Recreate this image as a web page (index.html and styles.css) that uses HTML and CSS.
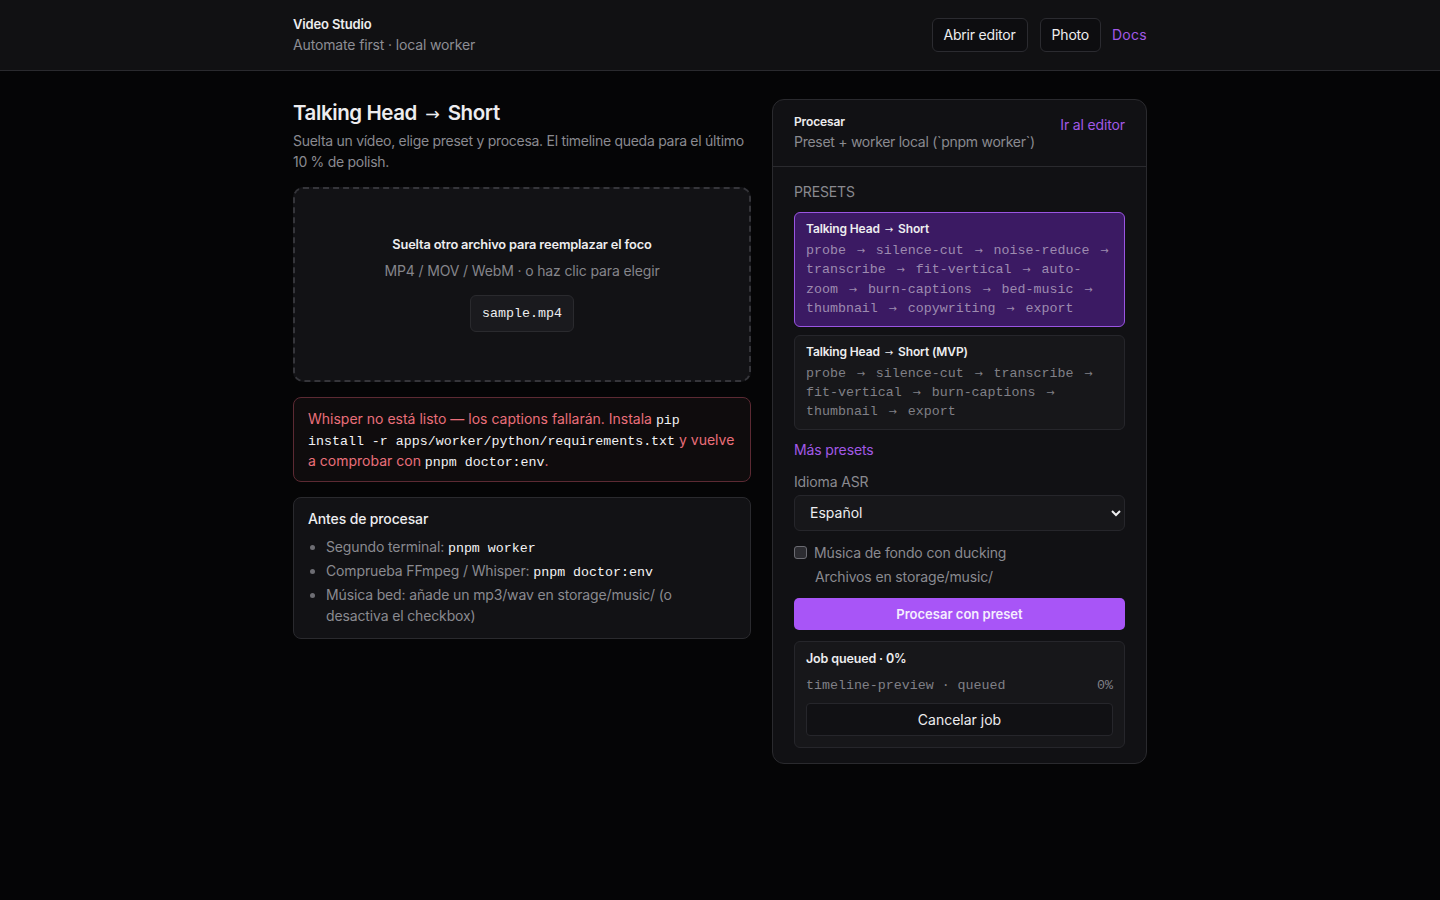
FILE: index.html
```html
<!DOCTYPE html>
<html lang="es">
<head>
    <meta charset="UTF-8">
    <meta name="viewport" content="width=device-width, initial-scale=1.0">
    <title>Video Studio</title>
    <link rel="stylesheet" href="styles.css">
</head>
<body>
    <header class="topbar">
        <div class="topbar-inner">
            <div class="brand">
                <div class="brand-name">Video Studio</div>
                <div class="brand-sub">Automate first · local worker</div>
            </div>
            <nav class="topnav">
                <a class="nav-btn" href="#">Abrir editor</a>
                <a class="nav-btn" href="#">Photo</a>
                <a class="nav-link" href="#">Docs</a>
            </nav>
        </div>
    </header>

    <main class="layout">
        <section class="left">
            <h1>Talking Head <span class="ar">→</span> Short</h1>
            <p class="lead">Suelta un vídeo, elige preset y procesa. El timeline queda para el último 10 % de polish.</p>

            <div class="dropzone">
                <div class="drop-title">Suelta otro archivo para reemplazar el foco</div>
                <div class="drop-sub">MP4 / MOV / WebM · o haz clic para elegir</div>
                <div class="file-chip">sample.mp4</div>
            </div>

            <div class="alert">
                Whisper no está listo — los captions fallarán. Instala <code>pip install -r apps/worker/python/requirements.txt</code> y vuelve a comprobar con <code>pnpm doctor:env</code>.
            </div>

            <div class="card checklist">
                <h3>Antes de procesar</h3>
                <ul>
                    <li>Segundo terminal: <code>pnpm worker</code></li>
                    <li>Comprueba FFmpeg / Whisper: <code>pnpm doctor:env</code></li>
                    <li>Música bed: añade un mp3/wav en storage/music/ (o desactiva el checkbox)</li>
                </ul>
            </div>
        </section>

        <aside class="panel">
            <div class="panel-head">
                <div>
                    <div class="panel-title">Procesar</div>
                    <div class="panel-sub">Preset + worker local (`pnpm worker`)</div>
                </div>
                <a class="link" href="#">Ir al editor</a>
            </div>

            <div class="panel-body">
                <div class="section-label">PRESETS</div>

                <div class="preset active">
                    <div class="preset-name">Talking Head <span class="ar">→</span> Short</div>
                    <div class="preset-steps">probe <span class="arr">→</span> silence-cut <span class="arr">→</span> noise-reduce <span class="arr">→</span> transcribe <span class="arr">→</span> fit-vertical <span class="arr">→</span> auto-zoom <span class="arr">→</span> burn-captions <span class="arr">→</span> bed-music <span class="arr">→</span> thumbnail <span class="arr">→</span> copywriting <span class="arr">→</span> export</div>
                </div>

                <div class="preset">
                    <div class="preset-name">Talking Head <span class="ar">→</span> Short (MVP)</div>
                    <div class="preset-steps">probe <span class="arr">→</span> silence-cut <span class="arr">→</span> transcribe <span class="arr">→</span> fit-vertical <span class="arr">→</span> burn-captions <span class="arr">→</span> thumbnail <span class="arr">→</span> export</div>
                </div>

                <a class="link more" href="#">Más presets</a>

                <label class="field-label" for="lang">Idioma ASR</label>
                <select id="lang" class="select">
                    <option>Español</option>
                </select>

                <label class="check">
                    <input type="checkbox">
                    <span>Música de fondo con ducking</span>
                </label>
                <div class="hint">Archivos en storage/music/</div>

                <button class="primary" type="button">Procesar con preset</button>

                <div class="job">
                    <div class="job-title">Job queued · 0%</div>
                    <div class="job-row">
                        <span>timeline-preview · queued</span>
                        <span>0%</span>
                    </div>
                    <button class="ghost" type="button">Cancelar job</button>
                </div>
            </div>
        </aside>
    </main>
</body>
</html>
```

FILE: styles.css
```css
/* Video Studio */
* {
    box-sizing: border-box;
}

body {
    margin: 0;
    background-color: #050506;
    color: #ededef;
    font-family: Inter, "Noto Sans", sans-serif;
    font-size: 14px;
    letter-spacing: -0.01em;
}

a {
    text-decoration: none;
}

code {
    font-family: "Liberation Mono", monospace;
    font-size: 13.3px;
    line-height: 1;
    color: #f2f2f4;
    letter-spacing: 0;
}

.ar {
    font-family: "DejaVu Sans", sans-serif;
    font-size: 0.85em;
    font-weight: 400;
    padding: 0 0.2em;
}

.topbar {
    background-color: #111113;
    border-bottom: 1px solid #2a2a2e;
}

.topbar-inner {
    width: 854px;
    margin: 0 auto;
    height: 70px;
    display: flex;
    align-items: center;
    justify-content: space-between;
}

.brand-name {
    font-size: 13px;
    font-weight: 600;
    line-height: 18px;
}

.brand-sub {
    font-size: 14px;
    color: #8d8d93;
    line-height: 20px;
    margin-top: 2px;
}

.topnav {
    display: flex;
    align-items: center;
    gap: 11px;
}

.nav-btn {
    display: block;
    padding: 0 11px;
    height: 34px;
    line-height: 32px;
    border: 1px solid #2b2b30;
    border-radius: 6px;
    color: #ededef;
    background-color: #0d0d10;
    letter-spacing: -0.015em;
}

.nav-btn + .nav-btn {
    margin-left: 1px;
}

.nav-link {
    color: #a259e6;
    margin-bottom: 1px;
    letter-spacing: 0.02em;
}

.layout {
    width: 854px;
    margin: 28px auto 0;
    display: grid;
    grid-template-columns: 458px 375px;
    gap: 21px;
    align-items: start;
}

h1 {
    margin: 0;
    font-size: 20.5px;
    font-weight: 600;
    letter-spacing: -0.02em;
    line-height: 28px;
}

.lead {
    margin: 2px 0 15px;
    color: #8a8a90;
    line-height: 21px;
    letter-spacing: -0.02em;
}

.dropzone {
    height: 195px;
    border: 2px dashed #35353a;
    border-radius: 10px;
    background-color: #121215;
    display: flex;
    flex-direction: column;
    align-items: center;
    justify-content: center;
}

.drop-title {
    font-size: 12.8px;
    font-weight: 600;
    line-height: 16px;
}

.drop-sub {
    margin-top: 9px;
    color: #85858b;
    line-height: 18px;
}

.file-chip {
    margin-top: 15px;
    padding: 0 11px;
    height: 37px;
    line-height: 35px;
    border: 1px solid #2a2a2e;
    border-radius: 6px;
    background-color: #1a1a1e;
    font-family: "Liberation Mono", monospace;
    font-size: 13.3px;
    letter-spacing: 0;
}

.alert {
    margin-top: 15px;
    padding: 10px 14px 10px;
    border: 1px solid #5c2a33;
    border-radius: 8px;
    background-color: #0f0c0d;
    color: #ea6f7a;
    line-height: 21px;
    letter-spacing: 0;
}

.card {
    margin-top: 15px;
    border: 1px solid #2a2a2e;
    border-radius: 8px;
    background-color: #121215;
}

.checklist {
    padding: 11px 14px 9px;
}

.checklist h3 {
    margin: 0;
    font-size: 14px;
    font-weight: 500;
    line-height: 20px;
}

.checklist ul {
    margin: 7px 0 0;
    padding-left: 18px;
    color: #8a8a90;
}

.checklist li {
    line-height: 21px;
    margin-bottom: 3px;
}

.checklist li::marker {
    color: #6d6d73;
}

.panel {
    border: 1px solid #2a2a2e;
    border-radius: 12px;
    background-color: #111114;
}

.panel-head {
    display: flex;
    justify-content: space-between;
    align-items: flex-start;
    padding: 14px 21px 14px;
    border-bottom: 1px solid #2a2a2e;
}

.panel-title {
    font-size: 12px;
    font-weight: 600;
    line-height: 16px;
}

.panel-sub {
    margin-top: 2px;
    color: #8a8a90;
    line-height: 20px;
    letter-spacing: -0.02em;
}

.link {
    color: #a259e6;
}

.panel-head .link {
    margin-top: 2px;
}

.panel-body {
    padding: 16px 21px 15px;
    display: flex;
    flex-direction: column;
}

.section-label {
    color: #8a8a90;
    line-height: 18px;
    margin-bottom: 11px;
}

.preset {
    border: 1px solid #26262b;
    border-radius: 6px;
    background-color: #17171a;
    padding: 8px 11.5px 7px 11px;
    margin-bottom: 8px;
}

.preset.active {
    background-color: #3b1a63;
    border-color: #9a55e2;
}

.preset-name {
    font-size: 12px;
    font-weight: 600;
    line-height: 16px;
}

.preset-steps {
    margin-top: 3px;
    font-family: "Liberation Mono", monospace;
    font-size: 13.3px;
    letter-spacing: 0;
    line-height: 19.4px;
    color: #808087;
}

.preset.active .preset-steps {
    color: #9d8bb0;
}

.arr {
    display: inline-block;
    width: 14px;
    text-align: center;
    font-family: "DejaVu Sans", sans-serif;
    font-size: 10px;
}

.more {
    margin-top: 1px;
    line-height: 22px;
    align-self: flex-start;
}

.field-label {
    margin-top: 10px;
    color: #8a8a90;
    line-height: 22px;
}

.select {
    margin-top: 2px;
    height: 36px;
    padding: 0 11px;
    border: 1px solid #26262b;
    border-radius: 6px;
    background-color: #17171a;
    color: #ededef;
    font-family: Inter, sans-serif;
    font-size: 14px;
}

.check {
    margin-top: 13px;
    display: flex;
    align-items: center;
    gap: 7px;
    color: #8a8a90;
    line-height: 18px;
}

.check input {
    appearance: none;
    margin: 0;
    width: 13px;
    height: 13px;
    border: 1px solid #6b6b72;
    border-radius: 3px;
    background-color: #2c2c31;
}

.hint {
    margin-top: 6px;
    padding-left: 21px;
    color: #8a8a90;
    line-height: 18px;
}

.primary {
    margin-top: 12px;
    height: 32px;
    border: none;
    border-radius: 5px;
    background-color: #a855f7;
    color: #f5eefe;
    font-family: Inter, sans-serif;
    font-size: 13px;
    font-weight: 600;
    cursor: pointer;
}

.job {
    margin-top: 11px;
    border: 1px solid #26262b;
    border-radius: 6px;
    background-color: #17171a;
    padding: 9px 11px 11px;
}

.job-title {
    font-size: 12.5px;
    font-weight: 600;
    line-height: 16px;
}

.job-row {
    margin-top: 9px;
    display: flex;
    justify-content: space-between;
    font-family: "Liberation Mono", monospace;
    font-size: 13.3px;
    letter-spacing: 0;
    color: #808087;
    line-height: 20px;
}

.ghost {
    margin-top: 7px;
    width: 100%;
    height: 33px;
    border: 1px solid #26262b;
    border-radius: 4px;
    background-color: #111114;
    color: #ededef;
    font-family: Inter, sans-serif;
    font-size: 14px;
    cursor: pointer;
}
```
